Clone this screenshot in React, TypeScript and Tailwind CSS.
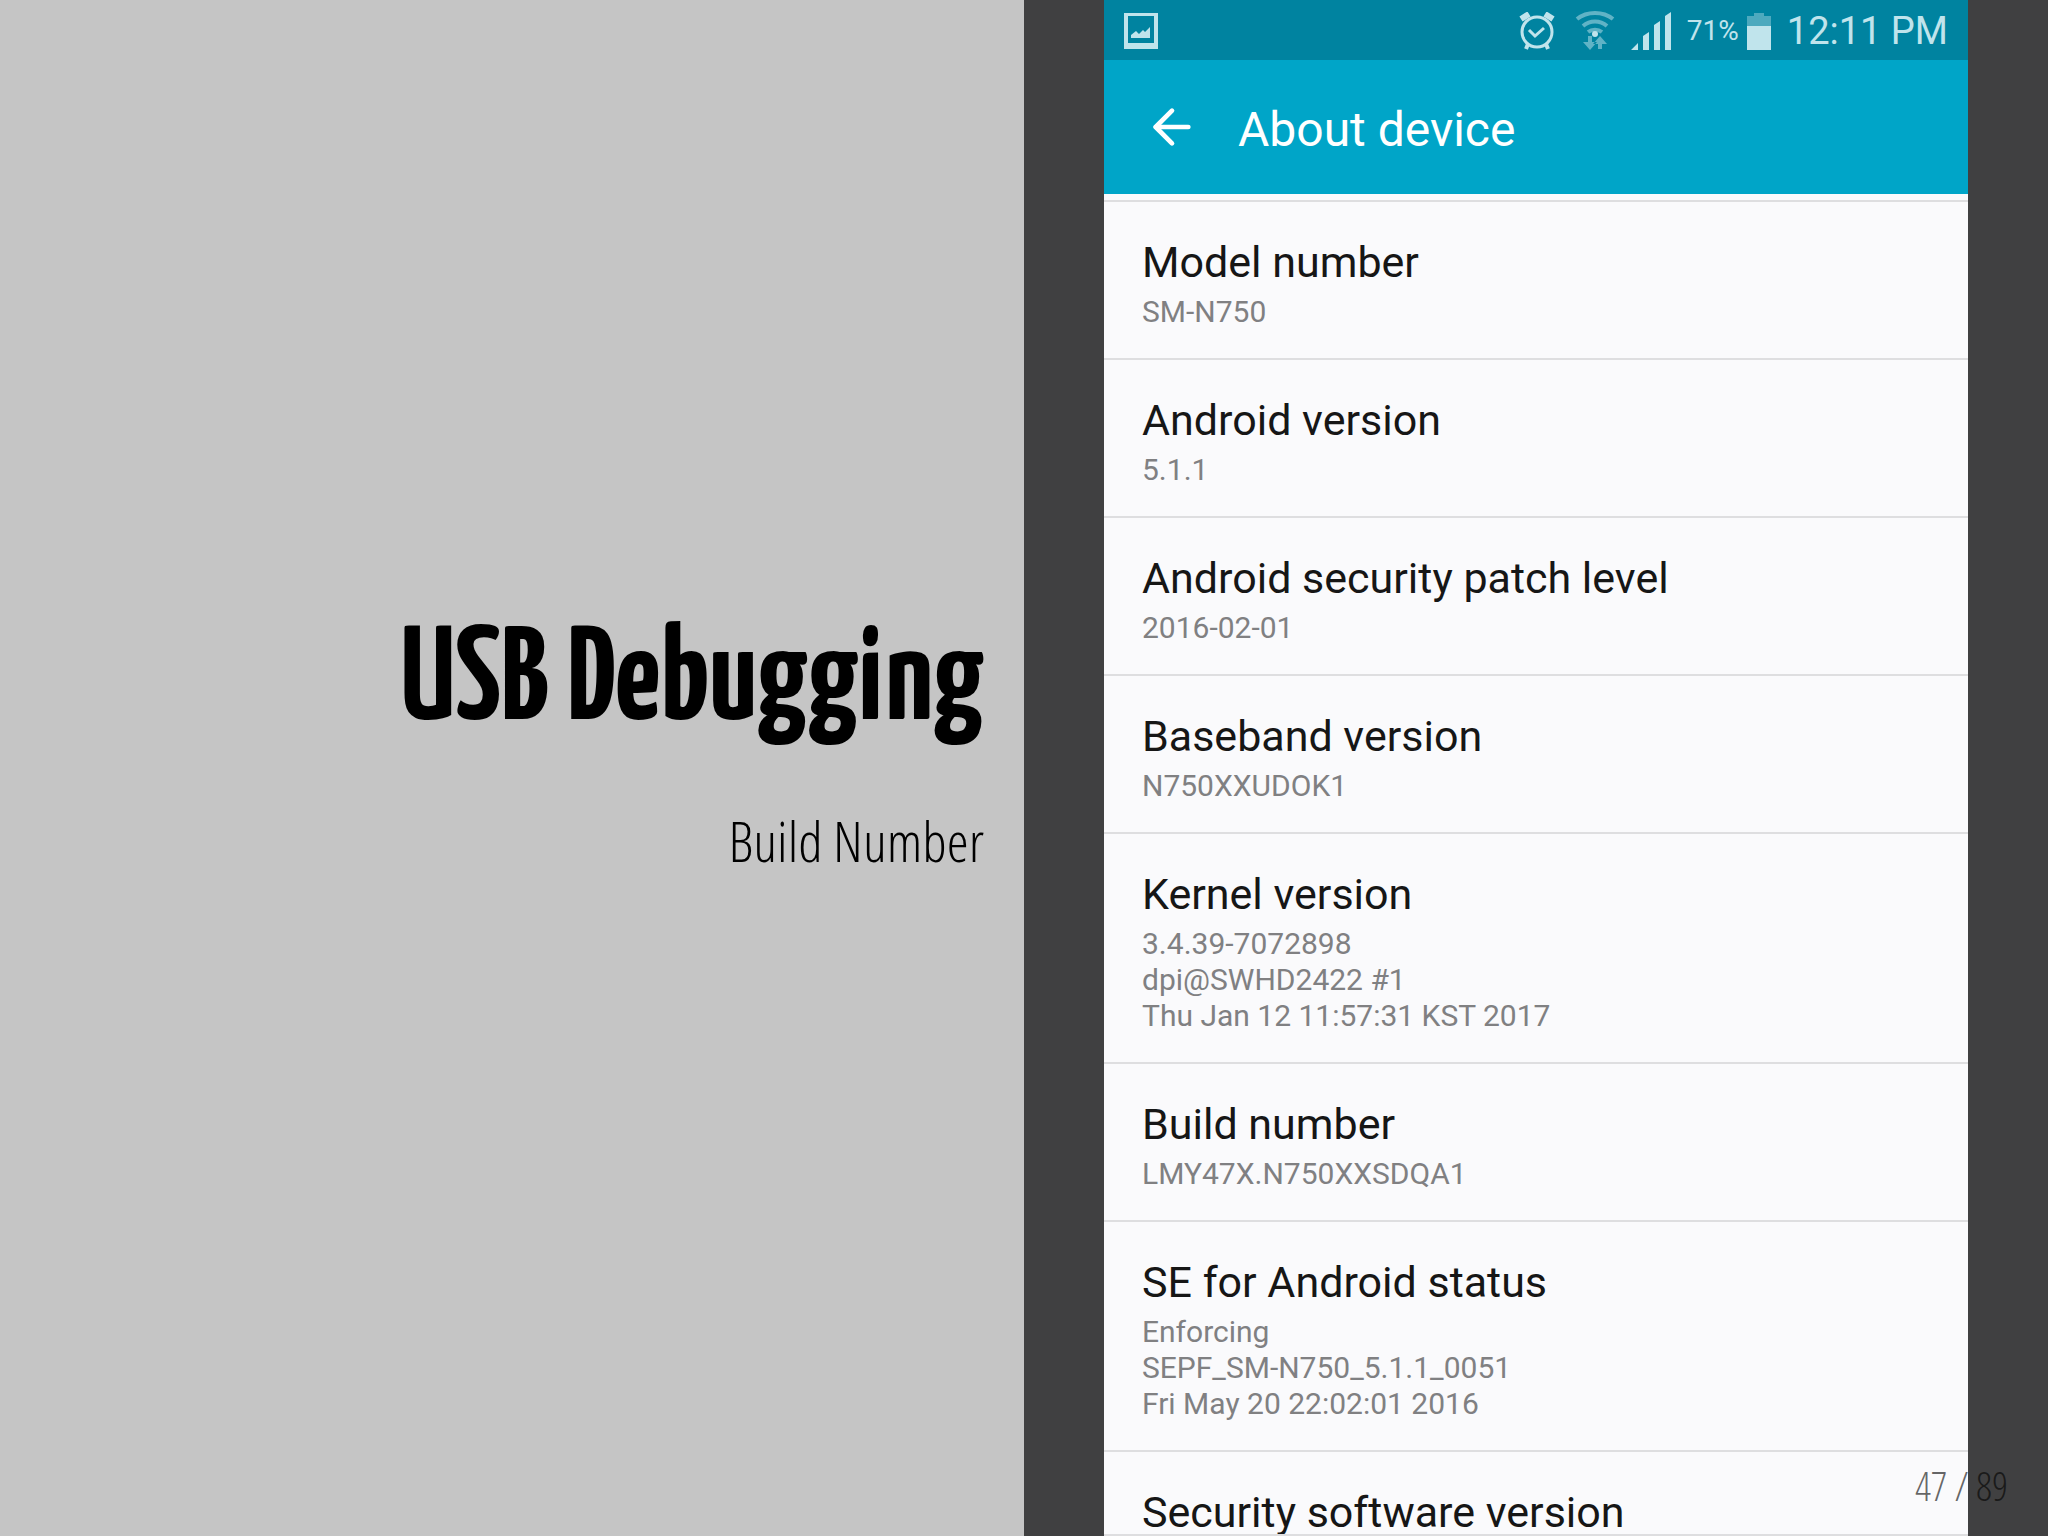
import { ArrowLeft } from 'lucide-react';

const rows = [
  { title: 'Model number', lines: ['SM-N750'] },
  { title: 'Android version', lines: ['5.1.1'] },
  { title: 'Android security patch level', lines: ['2016-02-01'] },
  { title: 'Baseband version', lines: ['N750XXUDOK1'] },
  { title: 'Kernel version', lines: ['3.4.39-7072898', 'dpi@SWHD2422 #1', 'Thu Jan 12 11:57:31 KST 2017'] },
  { title: 'Build number', lines: ['LMY47X.N750XXSDQA1'] },
  { title: 'SE for Android status', lines: ['Enforcing', 'SEPF_SM-N750_5.1.1_0051', 'Fri May 20 22:02:01 2016'] },
  { title: 'Security software version', lines: [] },
];

function GalleryIcon() {
  return (
    <svg width="34" height="36" viewBox="0 0 34 36" fill="currentColor" aria-hidden="true">
      <path fillRule="evenodd" d="M0 0h34v36H0zM4 3v27h26V3z" />
      <path d="M7 25v-3l5-4 3 3 4-4 2 2 5-5v11z" />
    </svg>
  );
}

function AlarmIcon() {
  return (
    <svg width="36" height="38" viewBox="0 0 36 38" fill="none" stroke="currentColor" aria-hidden="true">
      <circle cx="18" cy="20" r="15" strokeWidth="3" />
      <path d="M2 7l8-5M34 7l-8-5" strokeWidth="6" />
      <path d="M10 18l6 6 9-8" strokeWidth="3" />
      <path d="M9 32l-2 5M27 32l2 5" strokeWidth="4" />
    </svg>
  );
}

function WifiIcon() {
  return (
    <svg width="40" height="40" viewBox="0 0 40 40" fill="none" stroke="currentColor" aria-hidden="true">
      <g opacity="0.5" strokeWidth="4">
        <path d="M2 8c10-8 26-8 36 0" />
        <path d="M8 15c7-6 17-6 24 0" />
        <path d="M13 21c4-3 10-3 14 0" />
        <path d="M15 25v9M25 38V28" />
        <path d="M8 31l7 8 7-8zM18 33l7-8 7 8z" fill="currentColor" stroke="none" />
      </g>
      <circle cx="20" cy="23" r="3" fill="currentColor" stroke="none" />
    </svg>
  );
}

function SignalIcon() {
  return (
    <svg width="40" height="38" viewBox="0 0 40 38" fill="currentColor" aria-hidden="true">
      <path d="M0 38l7-7v7zM12 24l6-4v18h-6zM23 13l6-4v29h-6zM34 4l6-4v38h-6z" />
    </svg>
  );
}

function BatteryIcon() {
  return (
    <svg width="24" height="37" viewBox="0 0 24 37" fill="currentColor" aria-hidden="true">
      <path d="M0 3h7V0h10v3h7v10H0z" opacity="0.4" />
      <path d="M0 13h24v24H0z" />
    </svg>
  );
}

function StatusBar() {
  return (
    <div className="flex h-[60px] items-center justify-between bg-[#0083a0] px-5 pt-0.5 text-[#c0e4ec]">
      <GalleryIcon />
      <div className="flex items-center">
        <AlarmIcon />
        <div className="ml-5"><WifiIcon /></div>
        <div className="ml-4"><SignalIcon /></div>
        <span className="ml-4 text-[28px] leading-9">71%</span>
        <div className="ml-2"><BatteryIcon /></div>
        <span className="ml-4 text-[38px] leading-[58px]">12:11 PM</span>
      </div>
    </div>
  );
}

function Phone() {
  return (
    <div className="flex-1 overflow-hidden border-b-2 border-[#dedee0] bg-[#fafafc] font-[Roboto,sans-serif]">
      <StatusBar />
      <header className="flex h-[134px] items-center bg-[#00a5c8] pl-10 text-white">
        <button type="button" aria-label="Back">
          <ArrowLeft className="size-14" strokeWidth={2} />
        </button>
        <h2 className="ml-[38px] pt-1.5 text-[48px] leading-[60px]">About device</h2>
      </header>
      <dl className="mt-1.5">
        {rows.map((row) => (
          <div key={row.title} className="border-t-2 border-[#dedee0] px-[38px] pt-9 pb-7">
            <dt className="text-[43px] leading-[48px] text-[#161616]">{row.title}</dt>
            <dd className="mt-2 text-[30px] leading-9 text-[#808082]">
              {row.lines.map((line) => (
                <p key={line}>{line}</p>
              ))}
            </dd>
          </div>
        ))}
      </dl>
    </div>
  );
}

export default function App() {
  return (
    <main className="relative grid h-screen grid-cols-2 overflow-hidden bg-[#404041]">
      <section className="flex flex-col justify-center bg-[#c5c5c5] pr-10 pb-8 text-right text-black">
        <h1 className="font-['Yanone_Kaffeesatz','Liberation_Sans_Narrow',sans-serif] text-[133px] leading-[120px] font-bold">
          USB Debugging
        </h1>
        <p className="mt-14 font-['Open_Sans_Condensed_Light','Open_Sans_Condensed','Liberation_Sans_Narrow',sans-serif] text-[56px] leading-[80px] font-light">
          Build Number
        </p>
      </section>
      <section className="flex overflow-hidden px-20">
        <Phone />
      </section>
      <div className="absolute right-10 bottom-6 font-['Open_Sans_Condensed_Light','Open_Sans_Condensed','Liberation_Sans_Narrow',sans-serif] text-[40px] leading-[52px] font-light text-black/60">
        47 / 89
      </div>
    </main>
  );
}
